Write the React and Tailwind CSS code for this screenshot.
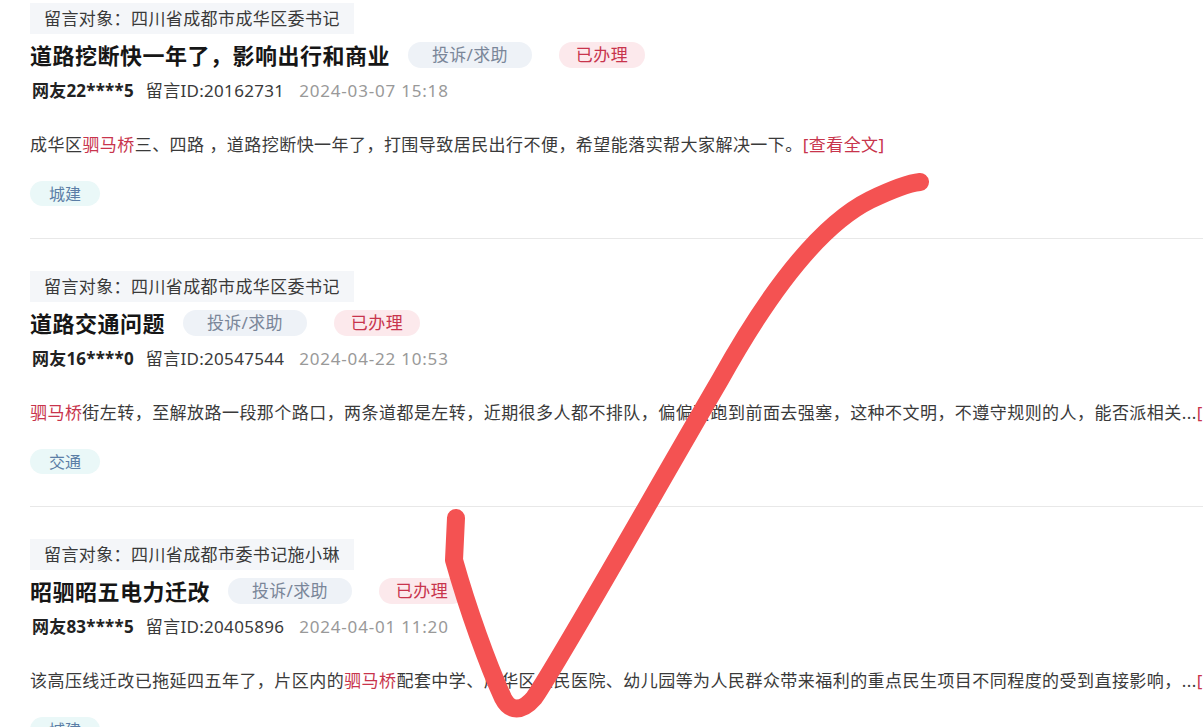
import React from "react";

const items = [
  {
    target: "留言对象：四川省成都市成华区委书记",
    title: "道路挖断快一年了，影响出行和商业",
    user: "网友22****5",
    id: "留言ID:20162731",
    date: "2024-03-07 15:18",
    content: [
      { t: "成华区" },
      { t: "驷马桥", red: true },
      { t: "三、四路 ，道路挖断快一年了，打围导致居民出行不便，希望能落实帮大家解决一下。" },
      { t: "[查看全文]", red: true },
    ],
    tag: "城建",
    first: true,
  },
  {
    target: "留言对象：四川省成都市成华区委书记",
    title: "道路交通问题",
    user: "网友16****0",
    id: "留言ID:20547544",
    date: "2024-04-22 10:53",
    content: [
      { t: "驷马桥", red: true },
      { t: "街左转，至解放路一段那个路口，两条道都是左转，近期很多人都不排队，偏偏要跑到前面去强塞，这种不文明，不遵守规则的人，能否派相关..." },
      { t: "[查看全文]", red: true },
    ],
    tag: "交通",
  },
  {
    target: "留言对象：四川省成都市委书记施小琳",
    title: "昭驷昭五电力迁改",
    user: "网友83****5",
    id: "留言ID:20405896",
    date: "2024-04-01 11:20",
    content: [
      { t: "该高压线迁改已拖延四五年了，片区内的" },
      { t: "驷马桥", red: true },
      { t: "配套中学、成华区人民医院、幼儿园等为人民群众带来福利的重点民生项目不同程度的受到直接影响，..." },
      { t: "[查看全文]", red: true },
    ],
    tag: "城建",
  },
];

function Item({ it }) {
  return (
    <div
      className={
        (it.first ? "pt-[3px]" : "pt-[32px]") +
        " pb-[32px] border-b border-[#e8e8e8]"
      }
    >
      <div className="flex">
        <div className="h-[31px] px-[14px] flex items-center bg-[#f4f6f9] text-[17px] tracking-[0.4px] text-[#3a3a3a] whitespace-nowrap">
          {it.target}
        </div>
      </div>
      <div className="h-[42px] flex items-center whitespace-nowrap">
        <span className="text-[22px] font-bold tracking-[0.5px] text-[#161616]">
          {it.title}
        </span>
        <span className="ml-[18px] h-[26px] px-[24px] rounded-full bg-[#eef2f7] text-[#7a8699] text-[17px] tracking-[0.3px] flex items-center">
          投诉/求助
        </span>
        <span className="ml-[27px] h-[26px] px-[17px] rounded-full bg-[#fce9ec] text-[#c8344c] text-[17px] tracking-[0.4px] flex items-center">
          已办理
        </span>
      </div>
      <div className="h-[30px] flex items-center whitespace-nowrap text-[17px]">
        <span className="font-bold text-[#222] ml-[2px] tracking-[0.2px]">{it.user}</span>
        <span className="ml-[12px] text-[#3a3a3a] tracking-[0.3px]">{it.id}</span>
        <span className="ml-[15px] text-[#999] tracking-[0.8px]">{it.date}</span>
      </div>
      <div className="mt-[24px] h-[30px] leading-[30px] whitespace-nowrap text-[17px] tracking-[0.45px] text-[#3a3a3a]">
        {it.content.map((c, i) => (
          <span key={i} className={c.red ? "text-[#c8344c]" : ""}>
            {c.t}
          </span>
        ))}
      </div>
      <div className="mt-[21px] flex">
        <span className="h-[25px] w-[70px] rounded-full bg-[#eaf8f8] text-[#5b7ea6] text-[16px] flex items-center justify-center">
          {it.tag}
        </span>
      </div>
    </div>
  );
}

export default function App() {
  return (
    <div className="relative w-[1203px] h-[727px] overflow-hidden bg-white font-['Noto_Sans','Noto_Sans_CJK_SC',sans-serif]">
      <div className="pl-[30px] w-[1400px]">
        {items.map((it, i) => (
          <Item key={i} it={it} />
        ))}
      </div>
      <svg
        className="absolute inset-0 pointer-events-none"
        width="1203"
        height="727"
        viewBox="0 0 1203 727"
      >
        <path
          d="M456 518 L454 560 C 468 610, 488 665, 503 698 C 510 712, 522 712, 534 698 C 560 660, 650 500, 720 380 C 770 290, 820 225, 870 200 C 895 188, 910 183, 920 182"
          fill="none"
          stroke="#f45252"
          strokeWidth="18"
          strokeLinecap="round"
          strokeLinejoin="round"
        />
      </svg>
    </div>
  );
}
